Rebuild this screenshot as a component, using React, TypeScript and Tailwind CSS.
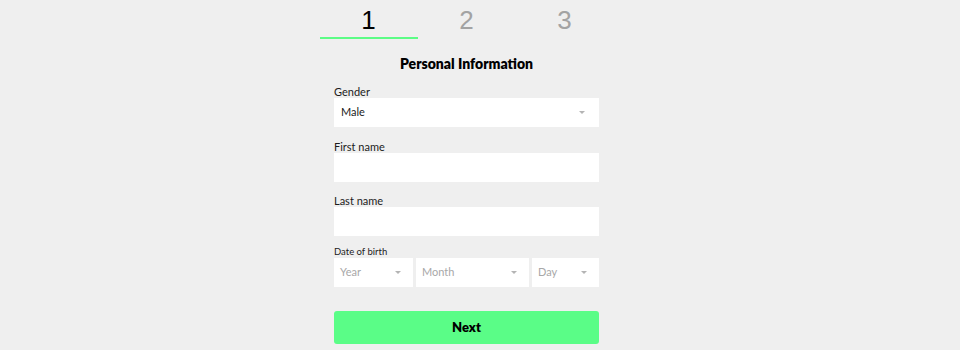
const FONT = "font-['Lato','Noto_Sans',sans-serif]";

function Caret() {
  return (
    <svg width="6" height="3" viewBox="0 0 6 3" className="shrink-0">
      <path d="M0 0 L6 0 L3 3 Z" fill="#b4b4b4" />
    </svg>
  );
}

function Select({ value, placeholder, className }: { value?: string; placeholder?: string; className: string }) {
  return (
    <div className={`h-[29px] bg-white flex items-center justify-between ${className}`}>
      {value ? (
        <span className="text-[11px] text-[#1c1c1c]">{value}</span>
      ) : (
        <span className="text-[11px] text-[#a8a8a8]">{placeholder}</span>
      )}
      <Caret />
    </div>
  );
}

function Field({ label }: { label: string }) {
  return (
    <div className="flex flex-col">
      <label className="text-[11px] leading-[13px] text-[#1c1c1c]">{label}</label>
      <div className="h-[29px] bg-white" />
    </div>
  );
}

const STEPS = ['1', '2', '3'];

export default function App() {
  return (
    <div className={`min-h-[350px] w-full bg-[#efefef] flex justify-center pr-[27px] ${FONT}`}>
      <div className="w-[294px] flex flex-col">
        {/* Steps */}
        <div className="flex">
          {STEPS.map((s, i) => (
            <div
              key={s}
              className={`w-[98px] h-[39px] pt-[5px] text-center border-b-2 ${i === 0 ? 'border-[#5cfc86]' : 'border-transparent'}`}
            >
              <span className={`font-['Liberation_Sans',Arial,sans-serif] text-[26px] leading-[30px] ${i === 0 ? 'text-black' : 'text-[#a3a3a3]'}`}>
                {s}
              </span>
            </div>
          ))}
        </div>

        {/* Form */}
        <div className="w-[265px] mx-auto flex flex-col">
          <h1 className="mt-[15px] text-center text-[14px] leading-[20px] font-extrabold text-black">Personal Information</h1>

          <div className="mt-[11px] flex flex-col">
            <label className="text-[11px] leading-[13px] text-[#1c1c1c]">Gender</label>
            <Select value="Male" className="pl-[7px] pr-[14px]" />
          </div>

          <div className="mt-[13px] flex flex-col gap-[12px]">
            <Field label="First name" />
            <Field label="Last name" />
          </div>

          <div className="mt-[10px] flex flex-col">
            <label className="text-[9.5px] leading-[12px] text-[#1c1c1c]">Date of birth</label>
            <div className="flex gap-[3px]">
              <Select placeholder="Year" className="w-[79px] pl-[6px] pr-[12px]" />
              <Select placeholder="Month" className="w-[113px] pl-[6px] pr-[12px]" />
              <Select placeholder="Day" className="w-[67px] pl-[6px] pr-[12px]" />
            </div>
          </div>

          <button className="mt-[24px] h-[33px] w-full rounded-[3px] bg-[#5afd87] text-[13px] font-extrabold text-black">
            Next
          </button>
        </div>
      </div>
    </div>
  );
}
